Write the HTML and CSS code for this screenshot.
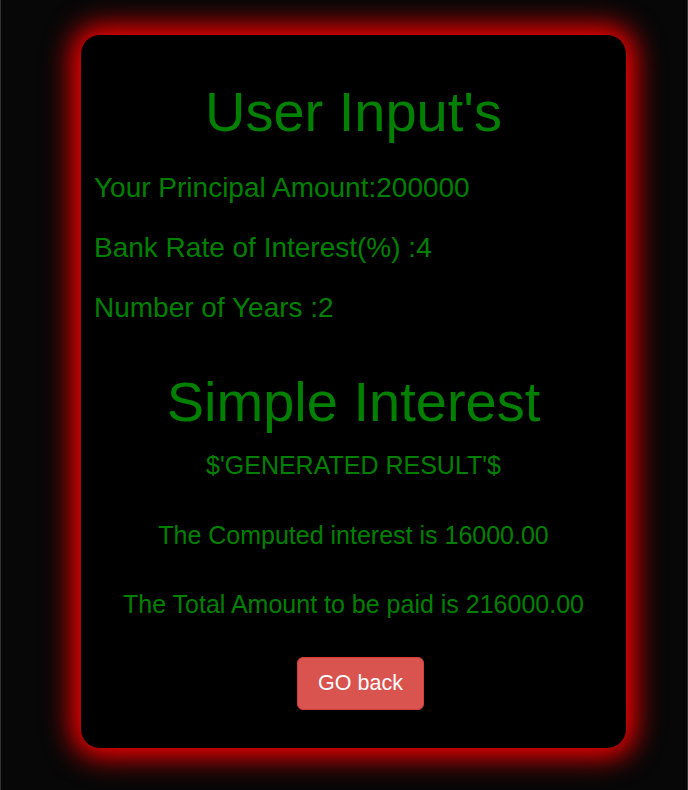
FILE: index.html
```html
<!DOCTYPE html>
<html>
<head>
<meta charset="utf-8">
<title>Simple Interest</title>
<link rel="stylesheet" href="styles.css">
</head>
<body>
<div class="page">
  <div class="card">
    <h1 class="title">User Input's</h1>
    <p class="field">Your Principal Amount:200000</p>
    <p class="field">Bank Rate of Interest(%) :4</p>
    <p class="field">Number of Years :2</p>
    <h1 class="section">Simple Interest</h1>
    <div class="result-label">$'GENERATED RESULT'$</div>
    <div class="result first">The Computed interest is 16000.00</div>
    <div class="result">The Total Amount to be paid is 216000.00</div>
    <div class="actions">
      <button class="btn-back" type="button">GO back</button>
    </div>
  </div>
</div>
</body>
</html>
```
FILE: styles.css
```css
html, body {
  margin: 0;
  padding: 0;
  background: #070707;
}

.page {
  box-sizing: border-box;
  min-height: 790px;
  border-left: 1px solid #333;
  border-right: 1px solid #333;
  padding-top: 35px;
  padding-left: 80px;
  font-family: "Liberation Sans", Arial, sans-serif;
  color: #008000;
}

.card {
  box-sizing: border-box;
  width: 545px;
  background: #000;
  border-radius: 19px;
  padding: 1px 13px 38px;
  box-shadow: 0 0 28px 9px #ff0000;
}

.title,
.section {
  font-size: 56px;
  font-weight: normal;
  line-height: 64px;
  text-align: center;
}

.title {
  margin: 44px 0 28px;
}

.section {
  margin: 46px 0 17px;
}

.field {
  font-size: 28px;
  line-height: 32px;
  margin: 28px 0;
}

.result-label,
.result {
  font-size: 25px;
  line-height: 28px;
  text-align: center;
}

.result {
  margin-top: 42px;
}

.result + .result {
  margin-top: 41px;
}

.actions {
  margin-top: 39px;
  text-align: center;
}

.btn-back {
  margin-left: 14px;
  font-family: "Liberation Sans", Arial, sans-serif;
  font-size: 21.5px;
  line-height: 31px;
  padding: 10px 20px;
  color: #fff;
  background: #d9534f;
  border: 1px solid #d43f3a;
  border-radius: 6px;
}
```
